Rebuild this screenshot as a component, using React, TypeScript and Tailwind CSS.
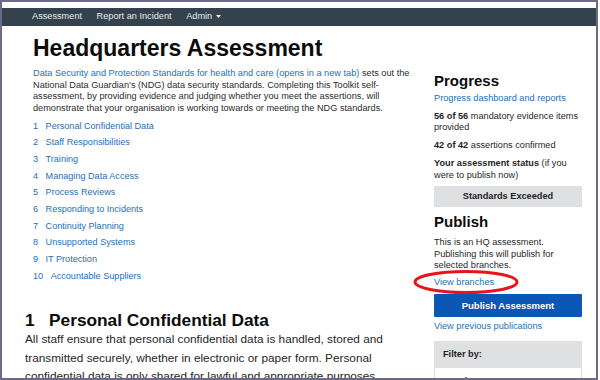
import React from 'react';

const sections = [
  "Personal Confidential Data",
  "Staff Responsibilities",
  "Training",
  "Managing Data Access",
  "Process Reviews",
  "Responding to Incidents",
  "Continuity Planning",
  "Unsupported Systems",
  "IT Protection",
  "Accountable Suppliers",
];

const Nav = () => (
  <nav className="h-[18px] bg-[#33424d] flex items-center pl-[30px] gap-[14.5px] text-[9.2px] text-[#e8eaec]">
    <span>Assessment</span>
    <span>Report an Incident</span>
    <span className="flex items-center gap-[4px]">
      Admin
      <svg width="5" height="3" viewBox="0 0 5 3"><path d="M0 0h5L2.5 3z" fill="#e8eaec" /></svg>
    </span>
  </nav>
);

const Sidebar = () => (
  <aside className="w-[148px] ml-auto shrink-0 text-[9.2px] leading-[11.6px] text-[#1f1f1f]">
    <h2 className="mt-[44.5px] text-[15px] leading-[20px] font-bold text-[#0b0c0c]">Progress</h2>
    <p className="mt-[2.5px] text-[#1d70b8]">Progress dashboard and reports</p>
    <p className="mt-[6px]"><b>56 of 56</b> mandatory evidence items provided</p>
    <p className="mt-[5.8px]"><b>42 of 42</b> assertions confirmed</p>
    <p className="mt-[5.4px] leading-[12px]"><b>Your assessment status</b> (if you were to publish now)</p>
    <div className="mt-[5.5px] h-[21px] bg-[#dee0e2] flex items-center justify-center font-bold">
      Standards Exceeded
    </div>
    <h2 className="mt-[5px] text-[15px] leading-[20px] font-bold text-[#0b0c0c]">Publish</h2>
    <p className="mt-[4.9px]">This is an HQ assessment. Publishing this will publish for selected branches.</p>
    <p className="mt-[5.2px] text-[#1d70b8]">View branches</p>
    <button className="mt-[5.5px] w-full h-[23px] bg-[#0b57b5] text-white font-bold text-[9.5px] rounded-[1px]">
      Publish Assessment
    </button>
    <p className="mt-[4.2px] text-[#1d70b8]">View previous publications</p>
    <div className="mt-[8.2px] border border-[#dee0e2]">
      <div className="h-[26px] bg-[#dee0e2] flex items-center pl-[8px] font-bold">Filter by:</div>
      <div className="pl-[8px] pt-[8px] font-bold">Mandatory</div>
    </div>
  </aside>
);

export default function App() {
  return (
    <div className="w-[600px] h-[380px] bg-white overflow-hidden" style={{ fontFamily: '"Liberation Sans", Arial, sans-serif' }}>
      <div className="relative w-[598px] h-[380px] border-2 border-[#6b6a88] overflow-hidden">
        <div className="h-[6px]" />
        <Nav />
        <div className="flex pl-[31px] pr-[14px]">
          <main className="w-[380px] shrink-0">
            <h1 className="mt-[8px] text-[23px] leading-[28px] font-bold text-[#0b0c0c]">Headquarters Assessment</h1>
            <p className="mt-[6px] text-[9.2px] leading-[11.7px] text-[#2b2b2b]">
              <span className="text-[#1d70b8]">Data Security and Protection Standards for health and care (opens in a new tab)</span>{" "}
              sets out the National Data Guardian’s (NDG) data security standards. Completing this Toolkit self-assessment, by providing evidence and judging whether you meet the assertions, will demonstrate that your organisation is working towards or meeting the NDG standards.
            </p>
            <ol className="mt-[3px] text-[9.1px] text-[#1d70b8]">
              {sections.map((s, i) => (
                <li key={i} className="h-[16.67px] leading-[16.67px] flex gap-[7.5px]">
                  <span>{i + 1}</span>
                  <span>{s}</span>
                </li>
              ))}
            </ol>
            <section className="ml-[-8px] w-[388px]">
              <h2 className="mt-[25.7px] text-[17.3px] leading-[20px] font-bold text-[#0b0c0c] flex gap-[14.4px]">
                <span>1</span>
                <span>Personal Confidential Data</span>
              </h2>
              <p className="text-[11.8px] leading-[18.5px] text-[#1f1f1f]">
                All staff ensure that personal confidential data is handled, stored and transmitted securely, whether in electronic or paper form. Personal confidential data is only shared for lawful and appropriate purposes.
              </p>
            </section>
          </main>
          <Sidebar />
        </div>
        <svg className="absolute left-[407.5px] top-[264.5px]" width="112" height="30" viewBox="0 0 112 30">
          <ellipse cx="56" cy="15" rx="51" ry="10.5" fill="none" stroke="#e8141c" strokeWidth="3" />
        </svg>
      </div>
    </div>
  );
}
